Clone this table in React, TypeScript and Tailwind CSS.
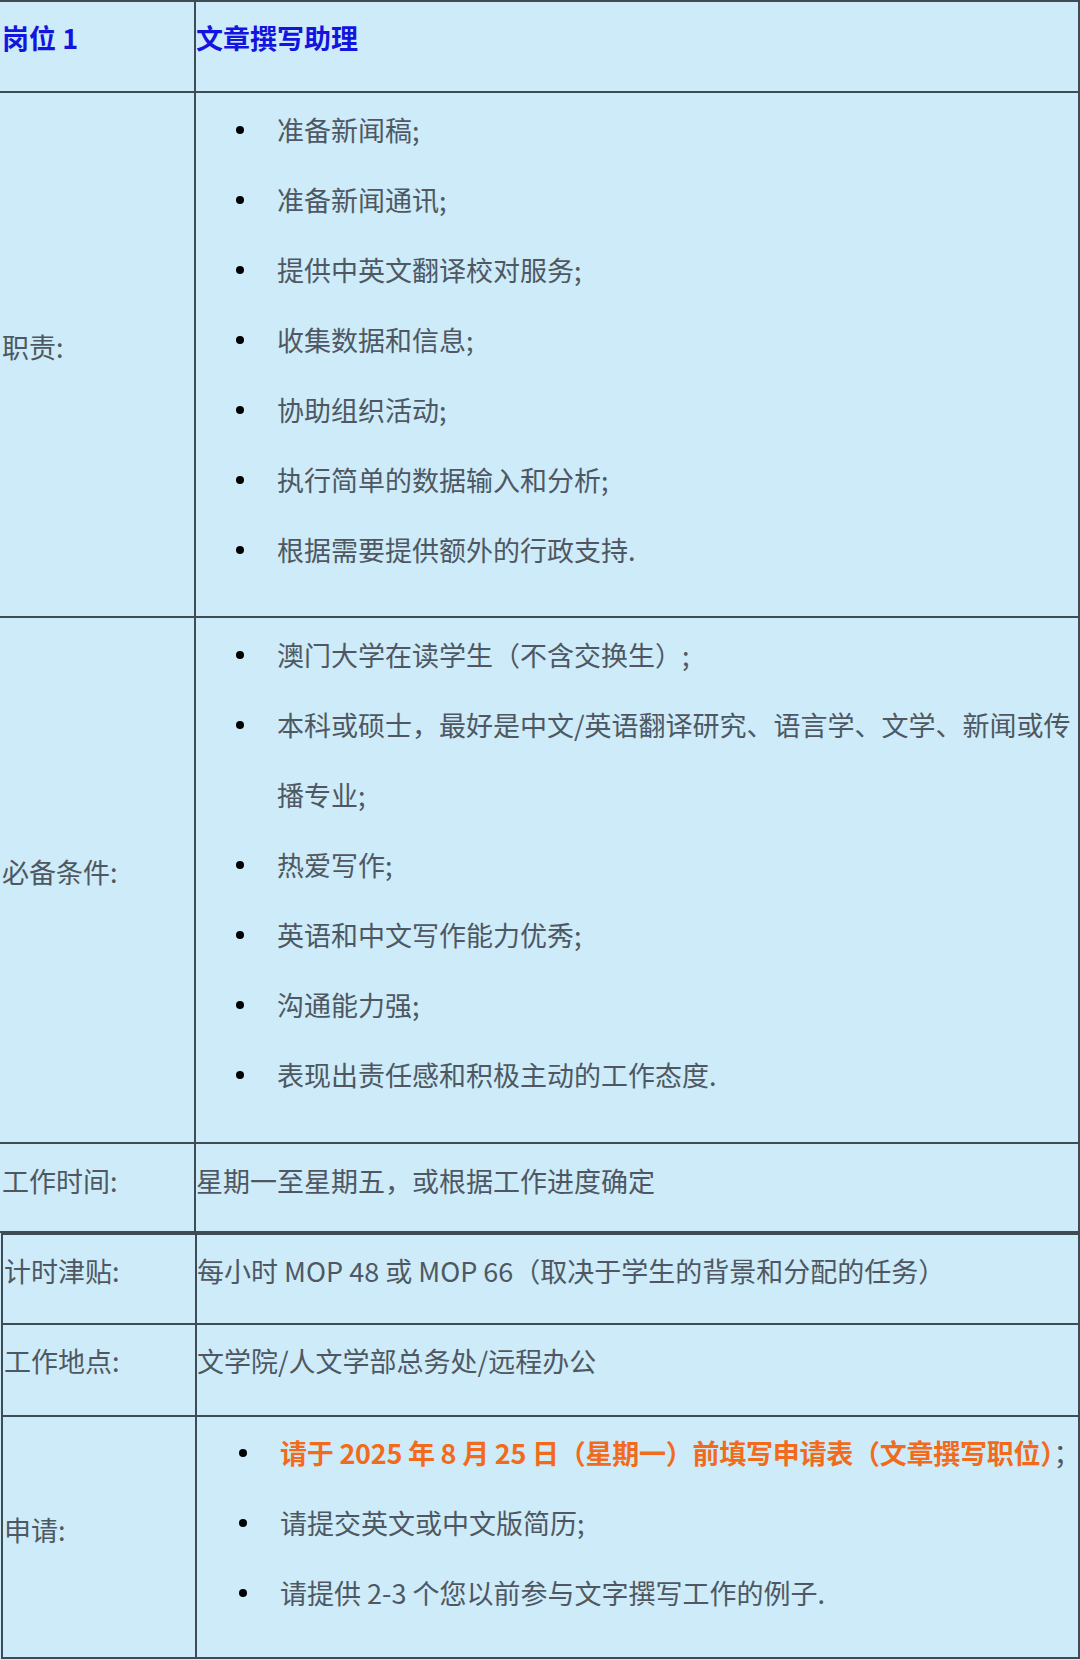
import * as React from "react";

const duties = [
  "准备新闻稿;",
  "准备新闻通讯;",
  "提供中英文翻译校对服务;",
  "收集数据和信息;",
  "协助组织活动;",
  "执行简单的数据输入和分析;",
  "根据需要提供额外的行政支持.",
];

const requirements = [
  "澳门大学在读学生（不含交换生）;",
  "本科或硕士，最好是中文/英语翻译研究、语言学、文学、新闻或传播专业;",
  "热爱写作;",
  "英语和中文写作能力优秀;",
  "沟通能力强;",
  "表现出责任感和积极主动的工作态度.",
];

function Bullet({ children }: { children: React.ReactNode }) {
  return (
    <li className="flex items-start">
      <span className="mt-[31px] w-[8px] h-[8px] shrink-0 rounded-full bg-black" />
      <span className="ml-[33px] flex-1">{children}</span>
    </li>
  );
}

export default function App() {
  return (
    <div
      className="w-[1080px] h-[1660px] overflow-hidden bg-[#cdebf8] text-[27px] leading-[70px] text-[#4f5862]"
      style={{ fontFamily: '"Noto Sans CJK SC", "Noto Sans", sans-serif' }}
    >
      {/* first table */}
      <div className="w-[1080px] border-t-2 border-r-2 border-b-2 border-[#3f4c56]">
        <div className="grid grid-cols-[194px_1fr] h-[91px] border-b-2 border-[#3f4c56]">
          <div className="pl-[2px] pt-[1px] font-bold text-[#1414e0]">岗位 1</div>
          <div className="border-l-2 border-[#3f4c56] pt-[1px] font-bold text-[#1414e0]">文章撰写助理</div>
        </div>

        <div className="grid grid-cols-[194px_1fr] h-[525px] border-b-2 border-[#3f4c56]">
          <div className="pl-[2px] pb-[15px] flex items-center">职责:</div>
          <div className="border-l-2 border-[#3f4c56] pt-[2px] pl-[40px]">
            <ul>
              {duties.map(d => (
                <Bullet key={d}>{d}</Bullet>
              ))}
            </ul>
          </div>
        </div>

        <div className="grid grid-cols-[194px_1fr] h-[526px] border-b-2 border-[#3f4c56]">
          <div className="pl-[2px] pb-[16px] flex items-center">必备条件:</div>
          <div className="border-l-2 border-[#3f4c56] pt-[2px] pl-[40px]">
            <ul>
              {requirements.map(r => (
                <Bullet key={r}>{r}</Bullet>
              ))}
            </ul>
          </div>
        </div>

        <div className="grid grid-cols-[194px_1fr] h-[87px]">
          <div className="pl-[2px] pt-[2px]">工作时间:</div>
          <div className="border-l-2 border-[#3f4c56] pt-[2px]">星期一至星期五，或根据工作进度确定</div>
        </div>
      </div>

      {/* second table */}
      <div className="ml-[1px] w-[1079px] border-2 border-[#3f4c56]">
        <div className="grid grid-cols-[192px_1fr] h-[90px] border-b-2 border-[#3f4c56]">
          <div className="pl-[1px] pt-[1px]">计时津贴:</div>
          <div className="border-l-2 border-[#3f4c56] pt-[1px]">每小时 MOP 48 或 MOP 66（取决于学生的背景和分配的任务）</div>
        </div>

        <div className="grid grid-cols-[192px_1fr] h-[92px] border-b-2 border-[#3f4c56]">
          <div className="pl-[1px] pt-[1px]">工作地点:</div>
          <div className="border-l-2 border-[#3f4c56] pt-[1px]">文学院/人文学部总务处/远程办公</div>
        </div>

        <div className="grid grid-cols-[192px_1fr] h-[240px]">
          <div className="pl-[1px] pb-[14px] flex items-center">申请:</div>
          <div className="border-l-2 border-[#3f4c56] pt-[1px] pl-[42px]">
            <ul>
              <Bullet>
                <span className="whitespace-nowrap">
                  <span className="font-bold text-[#f26b1c] tracking-[-0.25px]">
                    请于 2025 年 8 月 25 日（星期一）前填写申请表（文章撰写职位）
                  </span>
                  ；
                </span>
              </Bullet>
              <Bullet>请提交英文或中文版简历;</Bullet>
              <Bullet>请提供 2-3 个您以前参与文字撰写工作的例子.</Bullet>
            </ul>
          </div>
        </div>
      </div>
    </div>
  );
}
